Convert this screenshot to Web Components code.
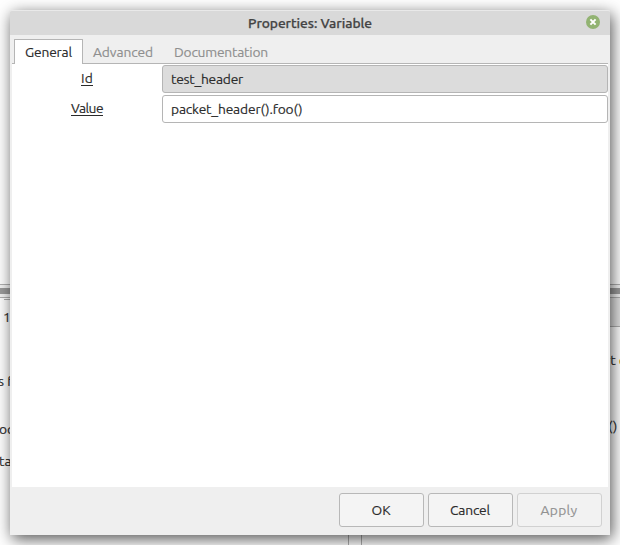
<!DOCTYPE html>
<html lang="en"><head><meta charset="utf-8"><title>Properties: Variable</title>
<style>html,body{margin:0;width:620px;height:545px;overflow:hidden;background:#fff;font:13.8px/18px Ubuntu,"Noto Sans",sans-serif;color:#2a2a2a;-webkit-text-stroke:.15px currentColor}</style></head>
<body><desktop-view></desktop-view>
<script>
const define=(name,html,init)=>customElements.define(name,class extends HTMLElement{
 connectedCallback(){if(this.shadowRoot)return;const r=this.attachShadow({mode:'open'});r.innerHTML=html;if(init)init(this,r)}});

// Text spaced evenly to a given width
define('fit-text','<style>:host{display:inline-block;white-space:pre}span{display:block}</style><span><slot></slot></span>',(h)=>{
 const w=+h.getAttribute('w'),n=h.textContent.length;
 const nat=h.getBoundingClientRect().width;
 h.style.letterSpacing=((w-nat)/n).toFixed(3)+'px';h.style.width=w+'px';
});
define('close-button',`<style>:host{display:block;width:14px;height:14px}svg{display:block}</style>
<svg width="14" height="14" viewBox="0 0 14 14"><circle cx="7" cy="7" r="7" fill="#92b372"/><path d="M4.4 4.4 9.6 9.6M9.6 4.4 4.4 9.6" stroke="#fff" stroke-width="2"/></svg>`);
define('title-bar',`<style>:host{display:grid;grid-template-columns:1fr auto 1fr;height:25px;box-sizing:border-box;border-top:1px solid #e9e9e9;background:#d9d9d9;border-radius:2px 2px 0 0;font-weight:500;-webkit-text-stroke:.25px #444;color:#444}
.t{grid-column:2;padding-top:3px}close-button{justify-self:end;margin:4px 10px 0 0}</style><span class="t"><slot></slot></span><close-button></close-button>`);
define('tab-item',`<style>:host{display:block;box-sizing:border-box;height:25px;padding:3px 10px 0 9px;border:1px solid transparent;border-bottom:0;color:#8e8e8e}
:host([active]){background:#fff;border-color:#b5b5b5;color:#2a2a2a;border-radius:1px 1px 0 0;padding-left:10px}</style><slot></slot>`);
define('tab-strip',`<style>:host{display:flex;align-items:end;height:29px;margin:0 2px;padding-left:2px;background:linear-gradient(#b5b5b5,#b5b5b5) bottom/100% 1px no-repeat}</style><slot></slot>`);
define('text-entry',`<style>:host{display:block;box-sizing:border-box;height:28px;border:1px solid #b5b5b5;border-radius:3px;background:#fff;padding:4px 8px 0}:host([disabled]){background:#dcdcdc}</style><slot></slot>`);
define('form-row',`<style>:host{display:grid;grid-template-columns:150px 1fr;height:28px}.l{text-align:center;padding-top:4px}</style><div class="l"><slot name="label"></slot></div><slot></slot>`);
define('form-page',`<style>:host{display:flex;flex-direction:column;gap:2px;flex:1;margin:0 2px;padding-top:1px;background:#fff}::slotted(*){flex:none}</style><slot></slot>`);
define('push-button',`<style>:host{display:flex;align-items:center;justify-content:center;box-sizing:border-box;width:85px;height:34px;padding:0 1px 0 0;border:1px solid #b8b8b8;border-radius:3px;background:#f4f4f4}:host([disabled]){border-color:#d1d1d1;color:#929292;background:#f2f2f2}</style><slot></slot>`);
define('button-row',`<style>:host{display:flex;justify-content:end;gap:4px;height:48px;box-sizing:border-box;padding:6px 8px}</style><slot></slot>`);
define('dialog-window',`<style>:host{display:flex;flex-direction:column;position:absolute;left:10px;top:10px;width:600px;height:525px;background:#efefef;border-radius:2px 2px 0 0;box-shadow:2px 4px 16px 0 rgba(0,0,0,.68)}</style><slot></slot>`);
// Text of the window behind, cut off by the dialog
define('back-text',`<style>:host{position:absolute;white-space:pre}</style><slot></slot>`);
define('desktop-view',`<style>:host{display:block;position:relative;width:620px;height:545px;overflow:hidden}
.bg{position:absolute;inset:0}.u{text-decoration:underline;text-underline-offset:2px}</style>
<svg class="bg" width="620" height="545" shape-rendering="crispEdges"><path fill="#fff" d="M0 0h620v545H0z"/><path fill="#f4f4f4" d="M0 285h620v13H0z"/><path fill="#e4e4e4" d="M600 298h20v28h-20z"/><path fill="#b0b0b0" d="M0 284h620v1H0zM0 297h620v1H0zM4 299h6v1H4zM600 326h20v1h-20zM348 530h1v15h-1zM361 530h1v15h-1z"/><path fill="#9c9c9c" d="M0 288h620v6H0z"/></svg>
<back-text style="left:3px;top:308px">1</back-text><back-text style="left:-2px;top:372px">s f</back-text><back-text style="left:-1px;top:420px">oc</back-text><back-text style="left:-1px;top:452px">ta</back-text>
<back-text style="left:605px;top:351px">rt <span style="color:#b8860b">c</span></back-text><back-text style="left:608px;top:417px">()</back-text>
<dialog-window>
<title-bar><fit-text w="124">Properties: Variable</fit-text></title-bar>
<tab-strip><tab-item active><fit-text w="47">General</fit-text></tab-item><tab-item><fit-text w="60">Advanced</fit-text></tab-item><tab-item><fit-text w="94">Documentation</fit-text></tab-item></tab-strip>
<form-page>
<form-row><fit-text class="u" slot="label" w="12">Id</fit-text><text-entry disabled><fit-text w="72">test_header</fit-text></text-entry></form-row>
<form-row><fit-text class="u" slot="label" w="32">Value</fit-text><text-entry><fit-text w="131.5">packet_header().foo()</fit-text></text-entry></form-row>
</form-page>
<button-row><push-button><fit-text w="19">OK</fit-text></push-button><push-button><fit-text w="40">Cancel</fit-text></push-button><push-button disabled><fit-text w="37">Apply</fit-text></push-button></button-row>
</dialog-window>`);
</script></body></html>
